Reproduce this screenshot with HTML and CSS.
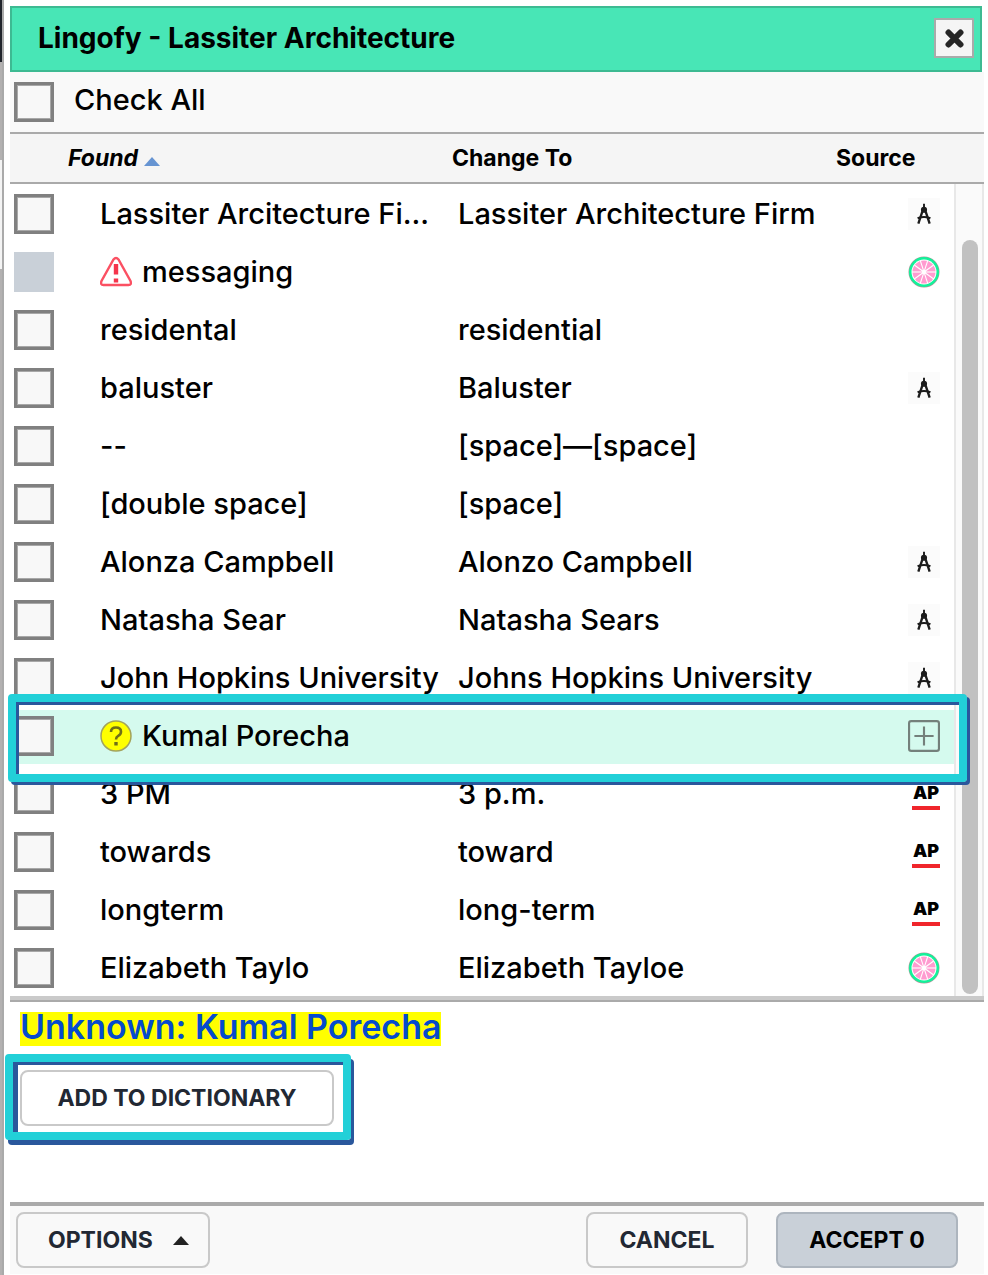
FILE: index.html
```
<!DOCTYPE html>
<html lang="en">
<head>
    <meta charset="UTF-8">
    <meta name="viewport" content="width=device-width, initial-scale=1.0">
    <title>Lingofy - Lassiter Architecture</title>
    <link rel="stylesheet" href="styles.css">
</head>
<body>
    <!-- shared icons -->
    <svg class="sprite" aria-hidden="true">
        <symbol id="icon-compass" viewBox="0 0 30 30">
            <rect width="30" height="30" fill="#fbfbfb"/>
            <g stroke="#1c1c1c" fill="none">
                <path d="M15 5.500v5" stroke-width="1.800"/>
                <circle cx="15" cy="11" r="2.200" fill="#1c1c1c" stroke-width="1.400"/>
                <path d="M13.500 12.500L9.700 24M16.500 12.500L20.300 24" stroke-width="2.200"/>
                <path d="M9 19q6-2.500 12 0" stroke-width="1.900"/>
            </g>
        </symbol>
        <symbol id="icon-grapefruit" viewBox="0 0 32 32">
            <circle cx="16" cy="16" r="15.500" fill="#a99"/>
            <circle cx="16" cy="16" r="15" fill="#12f29a"/>
            <circle cx="16" cy="16" r="12.500" fill="#fff"/>
            <circle cx="16" cy="16" r="11.500" fill="#ff9bd0"/>
            <g stroke="#fff" stroke-width="1.100">
                <path d="M16 4v24" transform="rotate(18 16 16)"/>
                <path d="M16 4v24" transform="rotate(54 16 16)"/>
                <path d="M16 4v24" transform="rotate(90 16 16)"/>
                <path d="M16 4v24" transform="rotate(126 16 16)"/>
                <path d="M16 4v24" transform="rotate(162 16 16)"/>
            </g>
            <circle cx="16" cy="16" r="2.200" fill="#fff"/>
        </symbol>
    </svg>

    <div class="page-edge"></div>

    <main class="dialog">
        <header class="dialog-header">
            <h1>Lingofy - Lassiter Architecture</h1>
            <button class="close" type="button" aria-label="Close">
                <svg width="20" height="20" viewBox="0 0 20 20"><path d="M4.500 4.500l12 12M16.500 4.500l-12 12" stroke="#262626" stroke-width="6" stroke-linecap="round"/></svg>
            </button>
        </header>

        <div class="check-all">
            <input type="checkbox" id="check-all">
            <label for="check-all">Check All</label>
        </div>

        <div class="results">
            <table>
                <colgroup>
                    <col class="col-check">
                    <col>
                    <col>
                    <col class="col-source">
                </colgroup>
                <thead>
                    <tr>
                        <th></th>
                        <th class="sorted" aria-sort="ascending">Found <svg width="16" height="9" viewBox="0 0 16 9"><path d="M8 0l8 9H0z" fill="#6694d2"/></svg></th>
                        <th>Change To</th>
                        <th>Source</th>
                    </tr>
                </thead>
                <tbody>
                    <tr>
                        <td><input type="checkbox" id="r1"></td>
                        <td><label for="r1">Lassiter Arcitecture Fi...</label></td>
                        <td>Lassiter Architecture Firm</td>
                        <td><svg class="source-icon"><use href="#icon-compass"/></svg></td>
                    </tr>
                    <tr>
                        <td><input type="checkbox" id="r2" disabled></td>
                        <td><label for="r2"><svg class="flag" viewBox="0 0 32 32"><path d="M13.500 3.500q2.500-3 5 0L30.500 25q1.500 4-2 4h-25q-3.500 0-2-4z" fill="#fff" stroke="#fb5062" stroke-width="2.400"/><path d="M16 8v10.500M16 22.500v4" stroke="#f5354c" stroke-width="4.400"/></svg>messaging</label></td>
                        <td></td>
                        <td><svg class="source-icon"><use href="#icon-grapefruit"/></svg></td>
                    </tr>
                    <tr>
                        <td><input type="checkbox" id="r3"></td>
                        <td><label for="r3">residental</label></td>
                        <td>residential</td>
                        <td></td>
                    </tr>
                    <tr>
                        <td><input type="checkbox" id="r4"></td>
                        <td><label for="r4">baluster</label></td>
                        <td>Baluster</td>
                        <td><svg class="source-icon"><use href="#icon-compass"/></svg></td>
                    </tr>
                    <tr>
                        <td><input type="checkbox" id="r5"></td>
                        <td><label for="r5">--</label></td>
                        <td>[space]—[space]</td>
                        <td></td>
                    </tr>
                    <tr>
                        <td><input type="checkbox" id="r6"></td>
                        <td><label for="r6">[double space]</label></td>
                        <td>[space]</td>
                        <td></td>
                    </tr>
                    <tr>
                        <td><input type="checkbox" id="r7"></td>
                        <td><label for="r7">Alonza Campbell</label></td>
                        <td>Alonzo Campbell</td>
                        <td><svg class="source-icon"><use href="#icon-compass"/></svg></td>
                    </tr>
                    <tr>
                        <td><input type="checkbox" id="r8"></td>
                        <td><label for="r8">Natasha Sear</label></td>
                        <td>Natasha Sears</td>
                        <td><svg class="source-icon"><use href="#icon-compass"/></svg></td>
                    </tr>
                    <tr>
                        <td><input type="checkbox" id="r9"></td>
                        <td><label for="r9">John Hopkins University</label></td>
                        <td>Johns Hopkins University</td>
                        <td><svg class="source-icon"><use href="#icon-compass"/></svg></td>
                    </tr>
                    <tr class="selected">
                        <td><input type="checkbox" id="r10"><span class="callout callout-row"></span></td>
                        <td><label for="r10"><svg class="flag" viewBox="0 0 32 32"><circle cx="16" cy="16" r="15" fill="#ff0" stroke="#a3a35c" stroke-width="1.500"/><path d="M11 12q0-4.500 5-4.500t5 4.200q0 2.600-2.800 4.100-2.200 1.200-2.200 3.700" fill="none" stroke="#6f6f18" stroke-width="2.600"/><path d="M16 22v3.500" stroke="#6f6f18" stroke-width="3.400"/></svg>Kumal Porecha</label></td>
                        <td></td>
                        <td>
                            <button class="add" type="button" aria-label="Add to dictionary">
                                <svg class="source-icon" viewBox="0 0 30 30"><rect x="1" y="1" width="28" height="28" rx="2" fill="none" stroke="#74807b" stroke-width="2"/><path d="M15 6v18M6 15h18" stroke="#74807b" stroke-width="2"/></svg>
                            </button>
                        </td>
                    </tr>
                    <tr>
                        <td><input type="checkbox" id="r11"></td>
                        <td><label for="r11">3 PM</label></td>
                        <td>3 p.m.</td>
                        <td><span class="ap">AP</span></td>
                    </tr>
                    <tr>
                        <td><input type="checkbox" id="r12"></td>
                        <td><label for="r12">towards</label></td>
                        <td>toward</td>
                        <td><span class="ap">AP</span></td>
                    </tr>
                    <tr>
                        <td><input type="checkbox" id="r13"></td>
                        <td><label for="r13">longterm</label></td>
                        <td>long-term</td>
                        <td><span class="ap">AP</span></td>
                    </tr>
                    <tr>
                        <td><input type="checkbox" id="r14"></td>
                        <td><label for="r14">Elizabeth Taylo</label></td>
                        <td>Elizabeth Tayloe</td>
                        <td><svg class="source-icon"><use href="#icon-grapefruit"/></svg></td>
                    </tr>
                </tbody>
            </table>
            <div class="scrollbar"><div class="thumb"></div></div>
        </div>

        <section class="detail">
            <h2><mark>Unknown: Kumal Porecha</mark></h2>
            <div class="detail-action">
                <button class="btn btn-add" type="button">ADD TO DICTIONARY</button>
                <span class="callout callout-add"></span>
            </div>
        </section>

        <footer class="dialog-footer">
            <button class="btn btn-options" type="button">OPTIONS <svg width="16" height="9" viewBox="0 0 16 9"><path d="M8 0l8 9H0z" fill="#222"/></svg></button>
            <button class="btn btn-cancel" type="button">CANCEL</button>
            <button class="btn btn-accept" type="button">ACCEPT 0</button>
        </footer>
    </main>
</body>
</html>
```
FILE: styles.css
```
* {
    box-sizing: border-box;
}
body {
    display: flex;
    gap: 6px;
    min-height: 100vh;
    margin: 0;
    padding-right: 4px;
    background-color: #fff;
    color: #000;
    font-family: Inter, "Liberation Sans", sans-serif;
    font-size: 29px;
    font-weight: 500;
    line-height: 34px;
}
.sprite {
    position: absolute;
    width: 0;
    height: 0;
}
/* Sliver of the page behind the dialog */
.page-edge {
    flex: none;
    width: 4px;
    border-right: 2px solid #aaa;
    background: linear-gradient(#20242b 62px, #b3b1b1 62px, #b3b1b1 160px, #f4f4f4 160px, #f4f4f4 269px, #b3b1b1 269px);
}
.dialog {
    display: flex;
    flex: 1;
    flex-direction: column;
    min-width: 0;
    padding: 6px 0 1px;
}
.dialog-header {
    display: flex;
    align-items: center;
    justify-content: space-between;
    height: 66px;
    margin-right: 2px;
    padding: 0 6px 2px 26px;
    border: 2px solid #3dba92;
    background-color: #48e6b6;
}
h1 {
    margin: 0;
    font-size: 28px;
    font-weight: 700;
}
.close {
    display: flex;
    align-items: center;
    justify-content: center;
    width: 40px;
    height: 40px;
    padding: 0;
    border: 2px solid #aaa;
    background-color: #f5f5f5;
}
.check-all {
    display: flex;
    align-items: center;
    gap: 20px;
    height: 60px;
    background-color: #f9f9f9;
}
.check-all label {
    padding-bottom: 4px;
}
input[type="checkbox"] {
    display: block;
    appearance: none;
    width: 40px;
    height: 40px;
    margin: 0 0 0 4px;
    border: 3px solid #808080;
    background-color: #f8f8f8;
    box-shadow: inset 0 0 0 1px #a8a8a8;
}
input[type="checkbox"]:disabled {
    border-color: #c9d0d8;
    background-color: #c9d0d8;
    box-shadow: none;
}

/* Results list */
.results {
    position: relative;
    border-bottom: 2px solid #aaa;
    box-shadow: inset 0 -4px 0 #cacaca;
    padding-bottom: 4px;
}
table {
    width: 100%;
    border-spacing: 0;
    table-layout: fixed;
}
.col-check {
    width: 48px;
}
.col-source {
    width: 158px;
}
th {
    height: 52px;
    padding: 0 10px;
    border-top: 2px solid #aaa;
    border-bottom: 2px solid #aaa;
    background-color: #f5f5f5;
    font-size: 23px;
    font-weight: 700;
    text-align: left;
}
th.sorted {
    font-style: italic;
}
td {
    height: 58px;
    padding: 0 0 2px;
    border-top: 4px solid transparent;
    background-clip: padding-box;
    white-space: nowrap;
}
td:nth-child(2) {
    padding-left: 42px;
}
td:nth-child(3) {
    padding-left: 16px;
}
td:last-child {
    padding-right: 44px;
}
td:last-child > * {
    margin-left: auto;
}
td label {
    display: flex;
    align-items: center;
    gap: 10px;
}
.selected {
    position: relative;
}
.selected td {
    background-color: #d5faee;
}
.flag {
    flex: none;
    width: 32px;
    height: 32px;
}
.source-icon {
    display: block;
    width: 32px;
    height: 32px;
}
.add {
    display: block;
    padding: 0;
    border: 0;
    background: none;
}
.ap {
    display: block;
    width: 28px;
    height: 32px;
    border-bottom: 4px solid #f0252b;
    font-size: 18px;
    font-weight: 900;
    line-height: 30px;
    text-align: center;
}
.scrollbar {
    position: absolute;
    top: 52px;
    right: 0;
    bottom: 4px;
    display: flex;
    width: 30px;
    padding: 56px 4px 2px 6px;
    border: solid #e8e8e8;
    border-width: 0 2px;
    background-color: #fafafa;
}
.thumb {
    flex: 1;
    border-radius: 8px;
    background-color: #c1c1c1;
}

/* Callout frames */
.callout {
    position: absolute;
    z-index: 2;
    border: 8px solid #22d0d8;
    border-radius: 4px;
    pointer-events: none;
}
.callout-row {
    top: -12px;
    right: 17px;
    bottom: -18px;
    left: -2px;
    box-shadow: inset 3px 3px 0 #2a579c, 3px 3px 0 #2a579c;
}
.callout-add {
    top: -16px;
    right: -17px;
    bottom: -14px;
    left: -15px;
    box-shadow: inset 5px 3px 0 #2a579c, 3px 5px 0 #2a579c;
}

.detail {
    display: flex;
    flex: 1;
    flex-direction: column;
    align-items: flex-start;
    gap: 24px;
    padding: 10px;
}
h2 {
    margin: 0;
    font-size: 34px;
    font-weight: 600;
    line-height: 30px;
}
mark {
    display: block;
    padding-bottom: 4px;
    background-color: #ff0;
    color: #054bcd;
}
.detail-action {
    position: relative;
}
.btn {
    height: 56px;
    padding: 0 30px;
    border: 2px solid #c9c9c9;
    border-radius: 8px;
    background-color: transparent;
    color: #222833;
    font-family: inherit;
    font-size: 23px;
    font-weight: 700;
}
.btn-add {
    display: block;
    min-width: 314px;
    background-color: #fff;
}
.btn-options {
    display: flex;
    align-items: center;
    justify-content: space-between;
    min-width: 194px;
    margin-right: auto;
    padding: 0 19px 0 30px;
}
.btn-cancel {
    min-width: 162px;
}
.btn-accept {
    min-width: 182px;
    border-color: #adb5be;
    background-color: #c9d0d8;
    color: #000;
}
.dialog-footer {
    display: flex;
    gap: 28px;
    padding: 6px 26px 6px 6px;
    border-top: 4px solid #aaa;
    background-color: #f9f9f9;
}
```
